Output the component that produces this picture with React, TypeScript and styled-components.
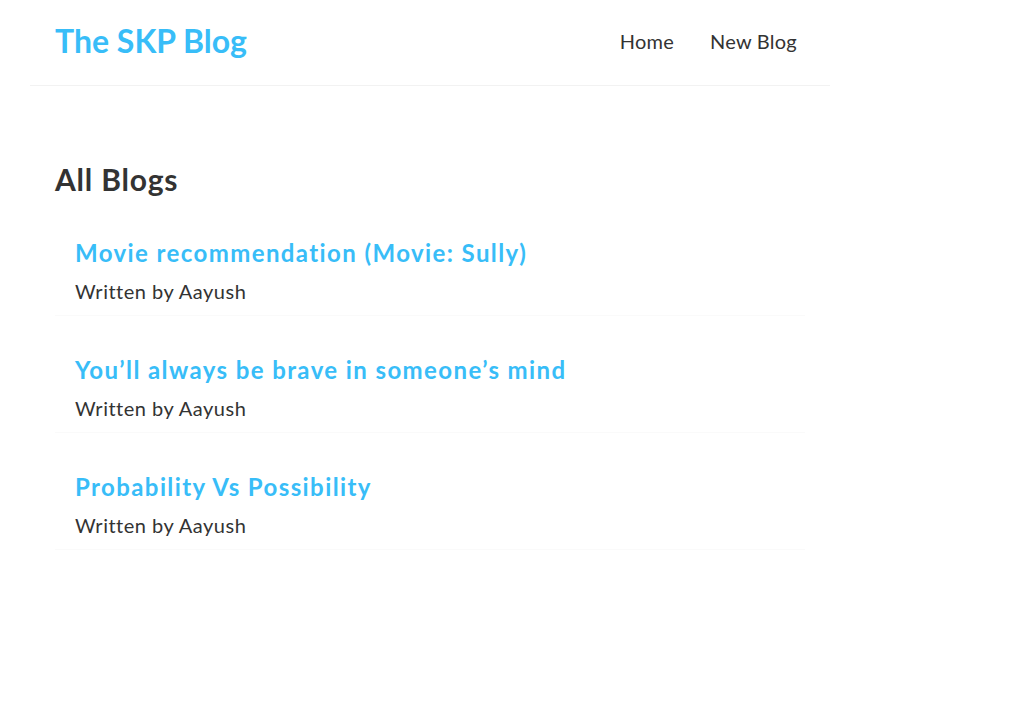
import React from "react";
import styled, { createGlobalStyle } from "styled-components";

const GlobalStyle = createGlobalStyle`
  * { box-sizing: border-box; }
  html, body { margin: 0; padding: 0; background: #ffffff; }
  body {
    font-family: "Lato", "Open Sans", sans-serif;
    color: #333333;
  }
`;

const Page = styled.div`
  width: 800px;
  margin: 0 0 0 30px;
`;

const Navbar = styled.nav`
  display: flex;
  align-items: center;
  padding: 18px 25px 22px;
  border-bottom: 1px solid #f2f2f2;
`;

const Brand = styled.h1`
  margin: 0;
  font-size: 32px;
  line-height: 45px;
  font-weight: 700;
  color: #38bdf8;
`;

const Links = styled.div`
  margin-left: auto;
  margin-right: 2px;
  display: flex;
  align-items: center;
`;

const NavLink = styled.a`
  margin-left: 24px;
  padding: 6px;
  font-size: 20px;
  letter-spacing: 0.25px;
  color: #333333;
  text-decoration: none;
`;

const Content = styled.main`
  padding: 75px 25px 0;
`;

const Heading = styled.h2`
  margin: 0 0 22px;
  font-size: 30px;
  line-height: 36px;
  font-weight: 700;
  letter-spacing: 0.8px;
  color: #333333;
`;

const Preview = styled.div`
  margin: 20px 0;
  padding: 19px 20px 12px;
  border-bottom: 1px solid #fafafa;
`;

const PreviewTitle = styled.h3`
  margin: 0 0 12px;
  font-size: 24px;
  line-height: 29px;
  font-weight: 700;
  letter-spacing: 1.4px;
  color: #38bdf8;
`;

const Author = styled.p`
  margin: 0;
  font-size: 20px;
  line-height: 24px;
  font-weight: 400;
  letter-spacing: 0.5px;
  color: #333333;
`;

const blogs = [
  { id: 1, title: "Movie recommendation (Movie: Sully)", author: "Aayush" },
  { id: 2, title: "You\u2019ll always be brave in someone\u2019s mind", author: "Aayush" },
  { id: 3, title: "Probability Vs Possibility", author: "Aayush" },
];

export default function App() {
  return (
    <>
      <GlobalStyle />
      <Page>
        <Navbar>
          <Brand>The SKP Blog</Brand>
          <Links>
            <NavLink href="#">Home</NavLink>
            <NavLink href="#">New Blog</NavLink>
          </Links>
        </Navbar>
        <Content>
          <Heading>All Blogs</Heading>
          {blogs.map((b) => (
            <Preview key={b.id}>
              <PreviewTitle>{b.title}</PreviewTitle>
              <Author>Written by {b.author}</Author>
            </Preview>
          ))}
        </Content>
      </Page>
    </>
  );
}
